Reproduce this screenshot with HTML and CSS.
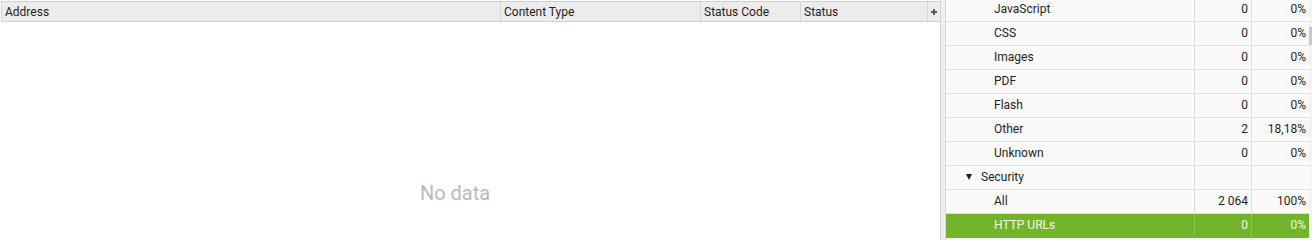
FILE: index.html
```html
<!DOCTYPE html>
<html>
<head>
    <meta name="viewport" content="width=device-width, initial-scale=1">
    <link rel="stylesheet" href="styles.css">
</head>

<body>
    <div class="mainPanel">
        <div class="gridHeader">
            <div class="headCell colAddress">Address</div>
            <div class="headCell colType">Content Type</div>
            <div class="headCell colCode">Status Code</div>
            <div class="headCell colStatus">Status</div>
            <div class="headCell colAdd">
                <svg width="8" height="8" viewBox="0 0 8 8"><path d="M3 1h2v2h2v2H5v2H3V5H1V3h2z" fill="#5a5a5a"/></svg>
            </div>
        </div>
        <div class="gridBody">
            <span class="noData">No data</span>
        </div>
    </div>

    <div class="splitter"></div>

    <div class="sidePanel">
        <div class="overview">
            <div class="ovRow"><div class="ovLabel">JavaScript</div><div class="ovNum">0</div><div class="ovNum">0%</div></div>
            <div class="ovRow"><div class="ovLabel">CSS</div><div class="ovNum">0</div><div class="ovNum">0%</div></div>
            <div class="ovRow"><div class="ovLabel">Images</div><div class="ovNum">0</div><div class="ovNum">0%</div></div>
            <div class="ovRow"><div class="ovLabel">PDF</div><div class="ovNum">0</div><div class="ovNum">0%</div></div>
            <div class="ovRow"><div class="ovLabel">Flash</div><div class="ovNum">0</div><div class="ovNum">0%</div></div>
            <div class="ovRow"><div class="ovLabel">Other</div><div class="ovNum">2</div><div class="ovNum">18,18%</div></div>
            <div class="ovRow"><div class="ovLabel">Unknown</div><div class="ovNum">0</div><div class="ovNum">0%</div></div>
            <div class="ovRow"><div class="ovLabel ovGroup"><span class="arrow"></span>Security</div><div class="ovNum"></div><div class="ovNum"></div></div>
            <div class="ovRow"><div class="ovLabel">All</div><div class="ovNum">2 064</div><div class="ovNum">100%</div></div>
            <div class="ovRow selected"><div class="ovLabel">HTTP URLs</div><div class="ovNum">0</div><div class="ovNum">0%</div></div>
            <div class="ovRow"><div class="ovLabel"></div><div class="ovNum"></div><div class="ovNum"></div></div>
        </div>
        <div class="scrollTrack"><div class="scrollThumb"></div></div>
    </div>
</body>
</html>
```

FILE: styles.css
```css
body {
    margin: 0;
    height: 240px;
    overflow: hidden;
    display: flex;
    background: #ffffff;
    font-family: Roboto, "Liberation Sans", sans-serif;
    font-size: 12px;
    color: #1e1e1e;
}

/* left grid */
.mainPanel {
    width: 940px;
    flex-shrink: 0;
    border-right: 1px solid #d2d2d2;
    padding-top: 1px;
    display: flex;
    flex-direction: column;
}

.gridHeader {
    display: flex;
    height: 19px;
    margin-left: 1px;
    background: #ececec;
    border-top: 1px solid #cfcfcf;
    border-bottom: 1px solid #cfcfcf;
    border-left: 1px solid #cfcfcf;
}

.headCell {
    display: flex;
    align-items: center;
    padding-left: 3px;
    padding-top: 1px;
    box-sizing: border-box;
    border-right: 1px solid #d6d6d6;
}

.colAddress { width: 499px; }
.colType { width: 200px; }
.colCode { width: 100px; }
.colStatus { width: 127px; }
.colAdd {
    width: 12px;
    padding-left: 2px;
    padding-top: 0;
    border-right: none;
}

.gridBody {
    flex: 1;
    display: flex;
    justify-content: center;
    padding-top: 158px;
    padding-right: 30px;
}

.noData {
    font-size: 20px;
    color: #b9b9b9;
    line-height: 26px;
    height: 26px;
}

.splitter {
    width: 4px;
    flex-shrink: 0;
    background: #f0f0f0;
    border-right: 1px solid #d8d8d8;
}

/* right overview */
.sidePanel {
    flex: 1;
    display: flex;
    background: #fafafa;
}

.overview {
    width: 363px;
    flex-shrink: 0;
    margin-top: -2px;
}

.ovRow {
    display: flex;
    height: 23px;
    border-bottom: 1px solid #dedede;
    line-height: 23px;
}

.ovLabel {
    width: 249px;
    box-sizing: border-box;
    padding-left: 48px;
    border-right: 1px solid #dedede;
}

.ovGroup {
    padding-left: 20px;
}

.arrow {
    display: inline-block;
    width: 0;
    height: 0;
    border-left: 3.5px solid transparent;
    border-right: 3.5px solid transparent;
    border-top: 6px solid #1e1e1e;
    margin-right: 9px;
    vertical-align: 1px;
}

.ovNum {
    width: 57px;
    box-sizing: border-box;
    padding-right: 3px;
    text-align: right;
    border-right: 1px solid #dedede;
}

.ovNum:last-child {
    border-right: none;
}

.selected {
    background: #72b52b;
    color: #f4f9ee;
    border-bottom-color: #72b52b;
}

.selected .ovLabel,
.selected .ovNum {
    border-right-color: #8cc452;
}

.scrollTrack {
    flex: 1;
    background: #f4f4f4;
}

.scrollThumb {
    margin-top: 27px;
    height: 18px;
    background: #c8c8c8;
}
```
